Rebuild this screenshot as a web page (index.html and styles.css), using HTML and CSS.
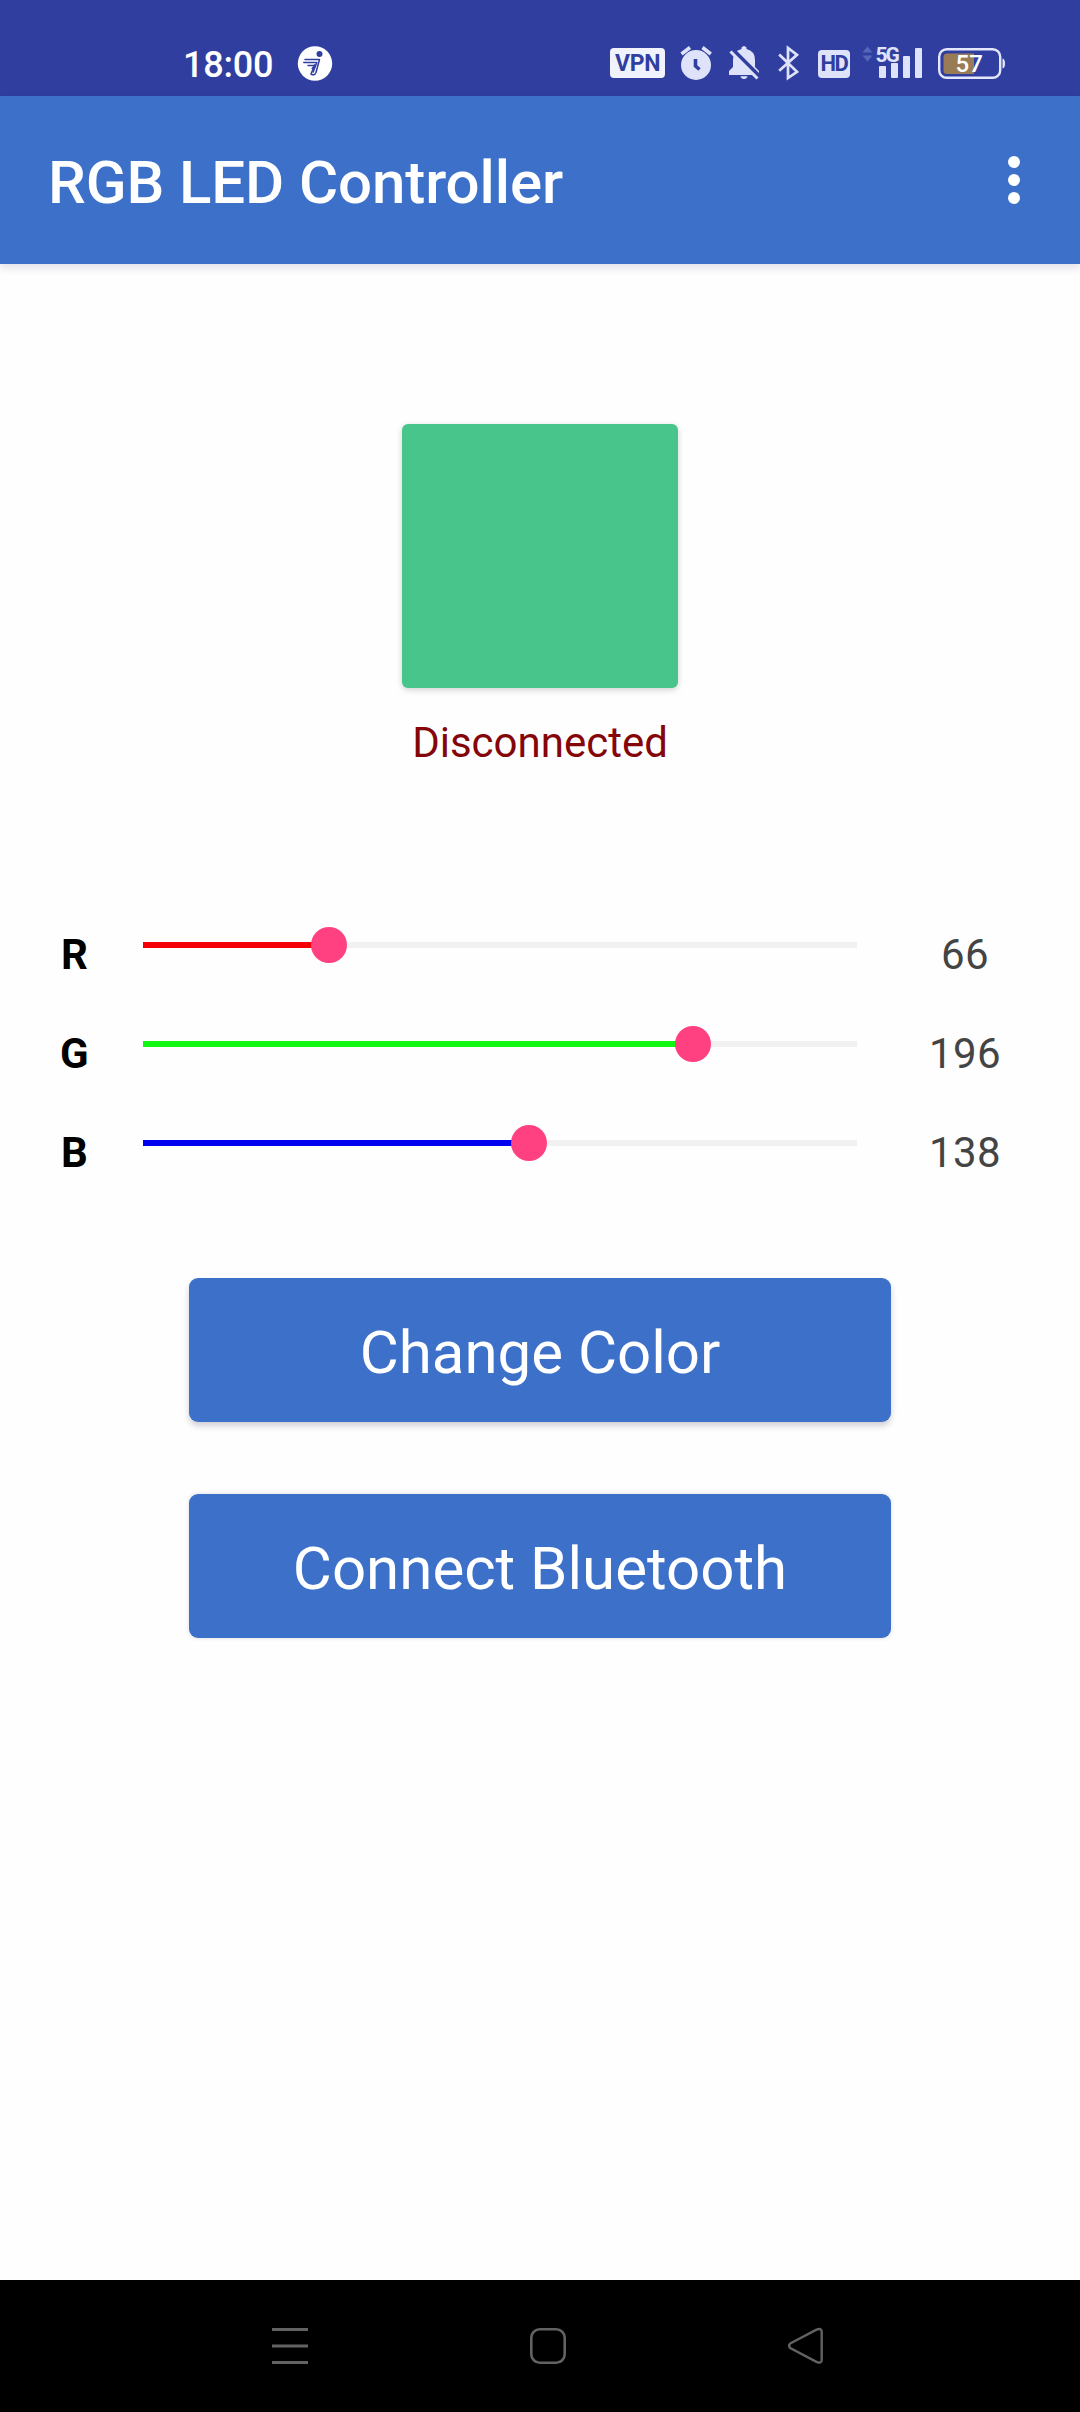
FILE: index.html
```html
<!DOCTYPE html>
<html lang="en">
<head>
<meta charset="utf-8">
<title>RGB LED Controller</title>
<link rel="stylesheet" href="styles.css">
</head>
<body>
<div class="screen">
  <header class="status-bar">
    <div class="status-left">
      <span class="clock">18:00</span>
      <svg class="runner" width="36" height="36" viewBox="297 45 36 36">
        <circle cx="315" cy="63.5" r="17.2" fill="#fff"/>
        <circle cx="319.5" cy="54" r="3" fill="#303f9f"/>
        <g fill="none" stroke="#303f9f" stroke-width="1.5" stroke-linecap="round" stroke-linejoin="round">
          <path d="M305 59.5H319.5L316 72.5Q314.5 76.2 311 74L314.8 64.8"/>
          <path d="M303.8 62.4H316.8L313.2 72"/>
          <path d="M308 65.5H315L312.2 68.5" />
        </g>
      </svg>
    </div>
    <div class="status-right">
      <span class="badge vpn">VPN</span>
      <svg width="34" height="36" viewBox="680 45 34 36">
        <circle cx="696" cy="65" r="15" fill="#dfe3fa"/>
        <path d="M681.500 54L690 47.500M710.800 54L702.500 47.500" stroke="#dfe3fa" stroke-width="3.500"/>
        <path d="M695.500 59V66L699.500 69.500" fill="none" stroke="#303f9f" stroke-width="3.600"/>
      </svg>
      <svg class="bell" width="32" height="36" viewBox="728 45 32 36">
        <path d="M729 75V71L733 67V60Q733 51 741.500 49V47.500Q744 44.500 746.500 47.500V49Q755 51 755 60V67L759 71V75ZM740.500 76.300H747.500Q746.800 79 744 79T740.500 76.300Z" fill="#dfe3fa"/>
        <path d="M732.500 49.500L760 77" stroke="#303f9f" stroke-width="4"/>
        <path d="M730.500 51.500L757.500 78.500" stroke="#dfe3fa" stroke-width="3"/>
      </svg>
      <svg class="bluetooth" width="24" height="36" viewBox="777 45 24 36">
        <path d="M779.200 54.500L797 71.800L788 78V48L797 54.800L779.200 70.800" fill="none" stroke="#dfe3fa" stroke-width="2.700"/>
      </svg>
      <span class="badge hd">HD</span>
      <svg class="signal" width="62" height="36" viewBox="862 45 62 36">
        <path d="M862.500 52.500L867.500 46.500L872.500 52.500ZM862.500 55.500H872.500L867.500 61.500Z" fill="#5667ba"/>
        <text class="network" x="875.500" y="61.500">5G</text>
        <g fill="#dfe3fa"><rect x="879" y="66" width="7" height="12" rx="1"/><rect x="891" y="63" width="7" height="15" rx="1"/><rect x="903" y="56" width="7" height="22" rx="1"/><rect x="915" y="48" width="7" height="30" rx="1"/></g>
      </svg>
      <svg class="battery" width="70" height="36" viewBox="937 45 70 36">
        <rect x="939.200" y="49.200" width="61" height="28.600" rx="7.500" fill="none" stroke="#e3e7fb" stroke-width="2.400"/>
        <path d="M974 53.500H947Q943.500 53.500 943.500 57V70.500Q943.500 74 947 74H974Z" fill="#997c55"/>
        <path d="M1002.500 58.500Q1005 59 1005 63.500T1002.500 68.500Z" fill="#e3e7fb"/>
        <text class="charge" x="955.500" y="72">57</text>
      </svg>
    </div>
  </header>
  <div class="app-bar">
    <h1>RGB LED Controller</h1>
    <svg width="12" height="48" viewBox="0 0 12 48" fill="#fff"><circle cx="6" cy="6" r="6"/><circle cx="6" cy="24" r="6"/><circle cx="6" cy="42" r="6"/></svg>
  </div>
  <main>
    <div class="swatch"></div>
    <p class="connection">Disconnected</p>
    <div class="channels">
      <div class="channel red"><b>R</b><div class="track"><div class="fill" style="width:186px"></div><i class="thumb"></i></div><span class="value">66</span></div>
      <div class="channel green"><b>G</b><div class="track"><div class="fill" style="width:550px"></div><i class="thumb"></i></div><span class="value">196</span></div>
      <div class="channel blue"><b>B</b><div class="track"><div class="fill" style="width:386px"></div><i class="thumb"></i></div><span class="value">138</span></div>
    </div>
    <div class="actions">
      <button>Change Color</button>
      <button class="connect">Connect Bluetooth</button>
    </div>
  </main>
  <nav>
    <svg width="40" height="40" viewBox="270 2326 40 40"><path d="M272 2329.500H308M272 2346H308M272 2362.500H308" stroke="#626262" stroke-width="3"/></svg>
    <svg width="40" height="40" viewBox="528 2326 40 40"><rect x="531.300" y="2329.300" width="33.400" height="33.400" rx="8.500" fill="none" stroke="#626262" stroke-width="2.600"/></svg>
    <svg width="40" height="40" viewBox="786 2326 40 40"><path d="M790.200 2343.500L816.500 2329.700Q821.700 2327.500 821.700 2332V2360Q821.700 2364 816.500 2361.800L790.200 2348Q788 2345.700 790.200 2343.500Z" fill="none" stroke="#626262" stroke-width="2.400"/></svg>
  </nav>
</div>
</body>
</html>
```
FILE: styles.css
```css
* { box-sizing: border-box; }
body { margin: 0; background: #fefefe; font-family: Roboto, sans-serif; }
svg { display: block; flex: none; overflow: visible; }
.screen { width: 1080px; height: 2412px; display: flex; flex-direction: column; overflow: hidden; }

.status-bar { height: 96px; flex: none; background: #303f9f; padding: 45px 73px 0 183px; display: flex; justify-content: space-between; }
.status-left, .status-right { display: flex; height: 36px; }
.clock { width: 114px; font-size: 36px; font-weight: 500; line-height: 40px; letter-spacing: -.2px; color: #fff; }
.badge { background: #dfe3fa; color: #303f9f; font-weight: 700; text-align: center; }
.vpn { width: 55px; height: 30px; margin: 3px 15px 0 0; border-radius: 4px; background: #f0f2fd; font-size: 23px; line-height: 31px; letter-spacing: -.3px; }
.bell { margin-left: 14px; }
.bluetooth { margin-left: 17px; }
.hd { width: 32px; height: 28px; margin: 5px 12px 0 17px; border-radius: 4px; font-size: 22px; line-height: 28px; letter-spacing: -1.5px; }
.network { font-size: 21px; font-weight: 700; letter-spacing: -2px; fill: #dfe3fa; }
.battery { margin-left: 13px; }
.charge { font-size: 24px; font-weight: 500; fill: #fff; }

.app-bar { position: relative; height: 168px; flex: none; background: #3d71c9; padding: 0 60px 0 48px; display: flex; align-items: center; justify-content: space-between; box-shadow: 0 3px 9px rgba(30, 30, 80, .15); }
h1 { margin: 5px 0 0; font-size: 60px; font-weight: 500; line-height: 72px; letter-spacing: -.1px; color: #fff; }

main { flex: 1; display: flex; flex-direction: column; align-items: center; padding-top: 160px; }
.swatch { width: 276px; height: 264px; flex: none; border-radius: 6px; background: #48c58b; box-shadow: 0 2px 6px rgba(0, 0, 0, .18); }
.connection { margin: 30px 0 0; font-size: 42px; line-height: 50px; color: #850609; }

.channels { width: 100%; margin-top: 128px; }
.channel { height: 99px; padding: 0 43px 0 60px; display: grid; grid-template-columns: 83px 714px 1fr; }
.channel b, .value { font-size: 42px; line-height: 50px; padding-top: 34px; }
.channel b { padding-left: 1px; }
.green b { padding-left: 0; }
.value { text-align: center; color: #444; letter-spacing: .4px; margin-left: 36px; }
.track { height: 6px; margin-top: 46px; background: #f1f1f1; display: flex; align-items: center; }
.fill { height: 6px; flex: none; }
.thumb { width: 36px; height: 36px; flex: none; margin-left: -18px; border-radius: 50%; background: #ff4081; }
.red .fill { background: #f60008; }
.green .fill { background: #12f812; }
.blue .fill { background: #0000ee; }

.actions { display: flex; flex-direction: column; gap: 72px; margin-top: 85px; }
button { width: 702px; height: 144px; border: 0; border-radius: 9px; padding: 6px 0 0; background: #3d71c9; color: #fff; font: 400 60px/72px Roboto, sans-serif; box-shadow: 0 4px 6px rgba(30, 20, 50, .2); }
.connect { box-shadow: 0 0 4px rgba(30, 20, 50, .15); }

nav { height: 132px; flex: none; background: #000; display: flex; justify-content: space-between; align-items: center; padding: 0 254px 0 270px; }
```
